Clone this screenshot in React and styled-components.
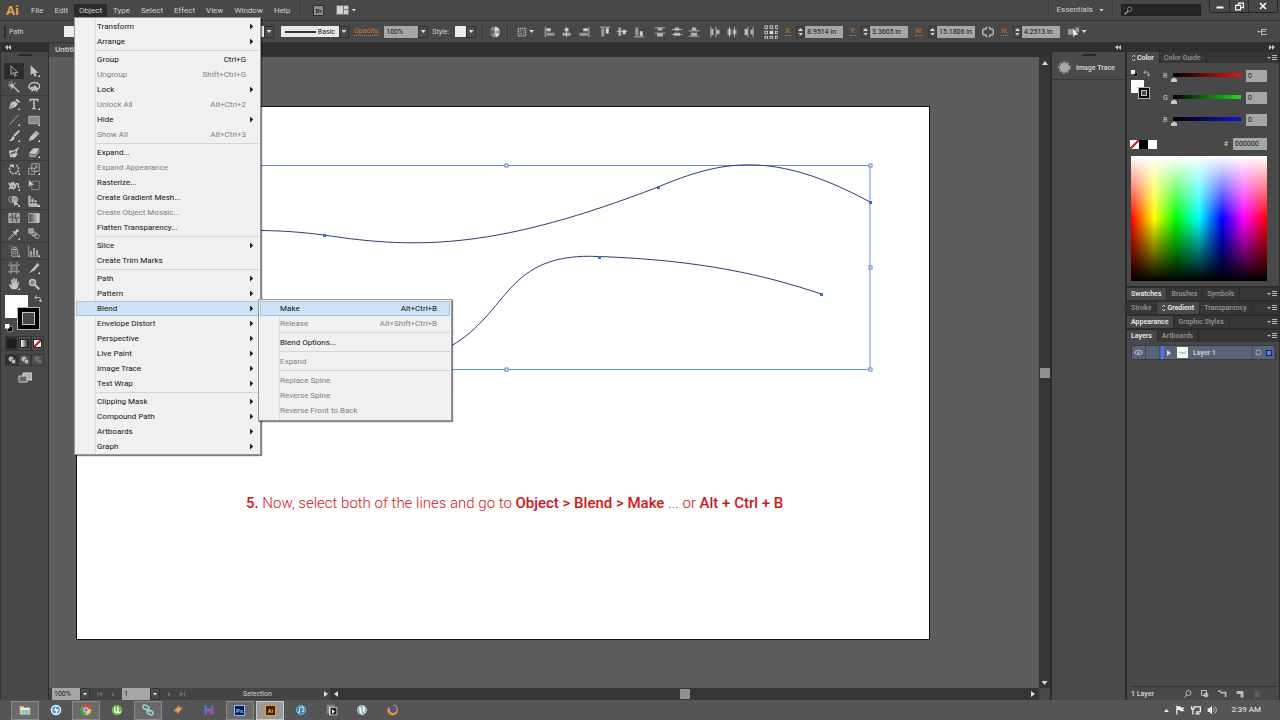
import React from 'react'
import styled, { createGlobalStyle, css } from 'styled-components'

const GlobalStyle = createGlobalStyle`
  * {
    box-sizing: border-box;
  }
  body {
    margin: 0;
    background: #484848;
    color: #d2d2d2;
    font-family: Roboto, "Open Sans", sans-serif;
    font-size: 8px;
    line-height: 10px;
  }
  button, input {
    font: inherit;
    color: inherit;
    margin: 0;
    padding: 0;
    border: 0;
    background: none;
    border-radius: 0;
  }
  ul {
    margin: 0;
    padding: 0;
    list-style: none;
  }
  svg {
    display: block;
    flex: none;
  }
`

const Screen = styled.div`
  display: flex;
  flex-direction: column;
  height: 100vh;
  min-height: 720px;
  overflow: hidden;
`

/* ---------- shared bits ---------- */

const Glyph = styled.svg.attrs((p) => ({
  viewBox: p.viewBox || '0 0 16 16',
  'aria-hidden': true,
}))`
  width: ${(p) => p.$w || 12}px;
  height: ${(p) => p.$h || p.$w || 12}px;
  fill: ${(p) => (p.$line ? 'none' : p.$c || '#b9b9b9')};
  stroke: ${(p) => (p.$line ? p.$c || '#b9b9b9' : 'none')};
  stroke-width: ${(p) => p.$sw || 1};
`

const turns = { down: 0, left: 90, up: 180, right: 270 }

const Caret = styled.i`
  width: ${(p) => (p.$big ? 6 : 5)}px;
  height: ${(p) => (p.$big ? 4 : 3)}px;
  flex: none;
  background: ${(p) => p.$c || '#dcdcdc'};
  clip-path: polygon(0 0, 100% 0, 50% 100%);
  transform: rotate(${(p) => turns[p.$to || 'down']}deg);
`

const Divider = styled.span`
  width: 1px;
  height: 14px;
  background: #3a3a3a;
  box-shadow: 1px 0 #505050;
`

const Grip = styled.span`
  display: block;
  width: 14px;
  height: 2px;
  margin: 0 auto;
  background: #2a2a2a;
`

/* ---------- menu bar ---------- */

const MenuBar = styled.header`
  display: flex;
  flex: none;
  height: 21px;
  padding-left: 6px;
  border-bottom: 1px solid #333;
  align-items: center;
  background: #484848;
`

const Logo = styled.span`
  width: 20px;
  color: #e0a04a;
  font: bold 13px/18px "Open Sans", sans-serif;
`

const Menus = styled.ul`
  display: flex;
  gap: 1px;
  height: 13px;
  margin-top: 1px;
`

const MenuSlot = styled.li`
  position: relative;
`

const MenuButton = styled.button`
  height: 13px;
  padding: 0 5px;
  font-size: 8px;
  background: ${(p) => (p.$open ? '#2b2b2b' : 'none')};
`

const BarTools = styled.div`
  display: flex;
  align-items: center;
  gap: 12px;
  margin-left: 5px;
`

const BarRight = styled.div`
  display: flex;
  align-items: center;
  gap: 8px;
  margin-left: auto;
  height: 100%;
`

const Workspace = styled.button`
  display: flex;
  align-items: center;
  gap: 6px;
`

const SearchBox = styled.label`
  display: flex;
  align-items: center;
  width: 80px;
  height: 12px;
  padding-left: 2px;
  background: #262626;
  border: 1px solid #202020;
  input {
    width: 60px;
    outline: 0;
  }
`

const WindowButtons = styled.div`
  display: flex;
  align-self: flex-start;
  margin-right: 2px;
  border: 1px solid #242424;
  border-top: 0;
  border-radius: 0 0 3px 3px;
`

const WindowButton = styled.button`
  display: flex;
  width: ${(p) => (p.$wide ? 29 : 19)}px;
  height: 12px;
  align-items: center;
  justify-content: center;
  background: #474747;
  & + & {
    border-left: 1px solid #2a2a2a;
  }
`

/* ---------- dropped menus ---------- */

const Popup = styled.ul`
  position: absolute;
  z-index: 5;
  width: ${(p) => (p.$sub ? 194 : 187)}px;
  top: ${(p) => (p.$sub ? '-2px' : '100%')};
  left: ${(p) => (p.$sub ? '182px' : '0')};
  padding: ${(p) => (p.$sub ? '1px 1px 2px' : '1px 1px 0')};
  color: #1c1c1c;
  background: linear-gradient(90deg, #f1f1f1 20px, #dcdcdc 20px, #dcdcdc 21px, #f0f0f0 21px);
  border: 1px solid #979797;
  box-shadow: 1px 1px 1px rgba(0, 0, 0, 0.5);
`

const PopupItem = styled.li`
  position: relative;
`

const PopupButton = styled.button`
  display: flex;
  width: 100%;
  height: 15px;
  align-items: center;
  padding: 0 ${(p) => (p.$sub ? 12 : 4)}px 0 ${(p) => (p.$sub ? 19 : 20)}px;
  font-size: 8px;
  border: 1px solid transparent;
  color: ${(p) => (p.disabled ? '#808080' : '#111')};
  ${(p) => p.$active && css`
    background: #cde2f5;
    border-color: #a5c5e3;
  `}
`

const Shortcut = styled.span`
  margin-left: auto;
  padding-right: ${(p) => (p.$sub ? 0 : 8)}px;
`

const SubArrow = styled.i`
  width: 3px;
  height: 6px;
  margin: 0 1px 0 auto;
  background: #111;
  clip-path: polygon(0 0, 100% 50%, 0 100%);
`

const Rule = styled.li`
  height: ${(p) => (p.$sub ? 4 : 3)}px;
  margin-left: 20px;
  background: linear-gradient(transparent 1px, #d4d4d4 1px, #d4d4d4 2px, transparent 2px);
`

const objectMenu = [
  { name: 'Transform', more: true },
  { name: 'Arrange', more: true },
  null,
  { name: 'Group', keys: 'Ctrl+G' },
  { name: 'Ungroup', keys: 'Shift+Ctrl+G', off: true },
  { name: 'Lock', more: true },
  { name: 'Unlock All', keys: 'Alt+Ctrl+2', off: true },
  { name: 'Hide', more: true },
  { name: 'Show All', keys: 'Alt+Ctrl+3', off: true },
  null,
  { name: 'Expand...' },
  { name: 'Expand Appearance', off: true },
  { name: 'Rasterize...' },
  { name: 'Create Gradient Mesh...' },
  { name: 'Create Object Mosaic...', off: true },
  { name: 'Flatten Transparency...' },
  null,
  { name: 'Slice', more: true },
  { name: 'Create Trim Marks' },
  null,
  { name: 'Path', more: true },
  { name: 'Pattern', more: true },
  {
    name: 'Blend',
    more: true,
    items: [
      { name: 'Make', keys: 'Alt+Ctrl+B', active: true },
      { name: 'Release', keys: 'Alt+Shift+Ctrl+B', off: true },
      null,
      { name: 'Blend Options...' },
      null,
      { name: 'Expand', off: true },
      null,
      { name: 'Replace Spine', off: true },
      { name: 'Reverse Spine', off: true },
      { name: 'Reverse Front to Back', off: true },
    ],
  },
  { name: 'Envelope Distort', more: true },
  { name: 'Perspective', more: true },
  { name: 'Live Paint', more: true },
  { name: 'Image Trace', more: true },
  { name: 'Text Wrap', more: true },
  null,
  { name: 'Clipping Mask', more: true },
  { name: 'Compound Path', more: true },
  { name: 'Artboards', more: true },
  { name: 'Graph', more: true },
]

const Menu = ({ items, sub }) => (
  <Popup $sub={sub}>
    {items.map((item, i) => item ? (
      <PopupItem key={item.name}>
        <PopupButton $sub={sub} disabled={item.off} $active={item.active || item.items}>
          {item.name}
          {item.keys && <Shortcut $sub={sub}>{item.keys}</Shortcut>}
          {item.more && <SubArrow />}
        </PopupButton>
        {item.items && <Menu items={item.items} sub />}
      </PopupItem>
    ) : <Rule key={i} $sub={sub} />)}
  </Popup>
)

/* ---------- control bar ---------- */

const ControlBar = styled.div`
  display: flex;
  flex: none;
  align-items: center;
  height: 22px;
  padding: 0 11px 0 4px;
  border-bottom: 1px solid #333;
  background: #484848;
`

const BarGrip = styled.span`
  width: 2px;
  height: 12px;
  margin-right: 3px;
  background: #2f2f2f;
`

const Kind = styled.span`
  width: 55px;
  font-size: 7px;
`

const Cluster = styled.div`
  display: flex;
  align-items: center;
  gap: ${(p) => p.$gap || 0}px;
  margin-left: ${(p) => p.$before || 0}px;
`

const Swatch = styled.span`
  width: ${(p) => p.$w || 11}px;
  height: 11px;
  background: #ececec;
`

const DropButton = styled.button`
  display: flex;
  width: 10px;
  height: 12px;
  align-items: center;
  justify-content: center;
  border: 1px solid #323232;
  background: #4b4b4b;
`

const BrushBox = styled.button`
  display: flex;
  width: 58px;
  height: 11px;
  padding: 0 4px;
  align-items: center;
  justify-content: space-between;
  color: #222;
  font-size: 7px;
  background: #e9e9e9;
`

const BrushLine = styled.i`
  width: 31px;
  height: 2px;
  background: #333;
`

const FieldName = styled.label`
  display: flex;
  align-items: center;
  gap: ${(p) => p.$gap || 5}px;
  color: ${(p) => (p.$plain ? '#d2d2d2' : '#c77a35')};
  font-size: 7px;
  span {
    border-bottom: ${(p) => (p.$plain ? '0' : '1px dotted #c77a35')};
    line-height: 8px;
  }
`

const Field = styled.input`
  width: ${(p) => p.$w || 38}px;
  height: 12px;
  padding-left: 2px;
  color: #151515;
  font-size: 7px;
  background: #a6a6a6;
`

const Steps = styled.i`
  display: flex;
  width: 9px;
  height: 12px;
  flex-direction: column;
  align-items: center;
  justify-content: space-around;
  border: 1px solid #363636;
`

const Value = ({ name, value }) => (
  <FieldName>
    <span>{name}:</span>
    <Cluster>
      <Steps>
        <Caret $to="up" />
        <Caret />
      </Steps>
      <Field defaultValue={value} />
    </Cluster>
  </FieldName>
)

const IconButton = styled.button`
  display: flex;
  align-items: center;
  justify-content: center;
  gap: 2px;
`

const alignIcons = [
  ['Align left', <><path d="M1 1h1v14H1z" /><path d="M3 3h6v4H3z" /><path d="M3 9h11v4H3z" opacity=".6" /></>],
  ['Align center', <><path d="M7 1h1v14H7z" /><path d="M5 3h5v4H5z" /><path d="M2 9h11v4H2z" opacity=".7" /></>],
  ['Align right', <><path d="M14 1h1v14h-1z" /><path d="M7 3h6v4H7z" /><path d="M2 9h11v4H2z" opacity=".6" /></>],
  ['Align top', <><path d="M1 1h14v1H1z" /><path d="M3 3h4v11H3z" opacity=".6" /><path d="M9 3h4v7H9z" /></>],
  ['Align middle', <><path d="M1 7h14v1H1z" /><path d="M3 2h4v11H3z" opacity=".7" /><path d="M9 5h4v6H9z" /></>],
  ['Align bottom', <><path d="M1 14h14v1H1z" /><path d="M3 2h4v11H3z" opacity=".6" /><path d="M9 7h4v6H9z" /></>],
  ['Distribute top', <><path d="M1 2h14v1H1zM1 9h14v1H1z" /><path d="M5 3h6v3H5zM4 10h8v4H4z" opacity=".8" /></>],
  ['Distribute middle', <><path d="M1 4h14v1H1zM1 11h14v1H1z" /><path d="M5 2h6v4H5zM4 9h8v4H4z" opacity=".8" /></>],
  ['Distribute bottom', <><path d="M1 6h14v1H1zM1 13h14v1H1z" /><path d="M5 2h6v4H5zM4 9h8v4H4z" opacity=".8" /></>],
  ['Distribute left', <><path d="M2 1h1v14H2zM9 1h1v14H9z" /><path d="M3 4h3v8H3zM10 5h4v6h-4z" opacity=".8" /></>],
  ['Distribute center', <><path d="M4 1h1v14H4zM11 1h1v14h-1z" /><path d="M2 4h5v8H2zM9 5h5v6H9z" opacity=".7" /></>],
  ['Distribute right', <><path d="M6 1h1v14H6zM13 1h1v14h-1z" /><path d="M2 4h4v8H2zM10 5h3v6h-3z" opacity=".8" /></>],
]

const AlignRow = styled.div`
  display: flex;
  gap: 5px;
  margin-left: 10px;
  button:nth-child(3n + 1):not(:first-child) {
    margin-left: 4px;
  }
`

/* ---------- tools panel ---------- */

const Body = styled.main`
  display: flex;
  flex: 1;
  min-height: 0;
`

const ToolsPanel = styled.aside`
  width: 49px;
  flex: none;
  border-right: 1px solid #2e2e2e;
  border-left: 1px solid #333;
  background: #484848;
`

const Strip = styled.div`
  display: flex;
  height: 9px;
  padding: 0 4px;
  align-items: center;
  justify-content: ${(p) => (p.$end ? 'flex-end' : 'flex-start')};
  background: #2f2f2f;
`

const ToolsGrip = styled(Grip)`
  margin: 2px auto 7px;
`

const ToolGroup = styled.div`
  display: grid;
  grid-template-columns: 20px 20px;
  padding: 0 3px;
  & + & {
    border-top: 1px solid #3b3b3b;
  }
`

const ToolButton = styled.button`
  display: flex;
  height: 16px;
  align-items: center;
  justify-content: center;
  background: ${(p) => (p.$on ? '#2c2c2c' : 'none')};
`

const corner = <path d="M16 13v3h-3z" fill="#ddd" stroke="none" />

const tools = [
  [
    ['Selection', <path d="M4 1v12l3-3 2 5 2-1-2-4h4z" fill="#333" stroke="#ccc" />],
    ['Direct selection', <><path d="M4 1v12l3-3 2 5 2-1-2-4h4z" fill="#c4c4c4" />{corner}</>],
    ['Magic wand', <><path d="M6 6l9 9" strokeWidth="2" /><path d="M5 0v3M5 8v3M0 5h3M8 4l3-2M1 1l2 2M2 9l2-2M5 3l1 2 2 0-2 2v2L4 7 2 6l2-1z" fill="#c4c4c4" /></>],
    ['Lasso', <><path d="M6 11C1 11 0 7 3 4s10-3 12 1-1 5-3 6M5 11c-2-2 1-4 2-2s-1 3-2 5" strokeWidth="2" /><path d="M8 5v9l2-2 2 3 1-1-1-3h3z" fill="#c4c4c4" stroke="none" /></>],
  ],
  [
    ['Pen', <><path d="M1 15L4 6l5-2 4 4-3 4z" fill="#c4c4c4" stroke="none" /><path d="M10 3l2-2 4 4-2 2z" fill="#c4c4c4" stroke="none" /><path d="M2 14l5-5" stroke="#444" />{corner}</>],
    ['Type', <><path d="M2 1h12v4h-1l-1-2H9v10l2 1v1H5v-1l2-1V3H4L3 5H2z" fill="#c4c4c4" stroke="none" />{corner}</>],
    ['Line', <><path d="M2 14L14 1" />{corner}</>],
    ['Rectangle', <><path d="M1 3h14v10H1z" fill="#8a8a8a" />{corner}</>],
    ['Paintbrush', <><path d="M15 1L8 8" strokeWidth="3" /><path d="M1 14c4 0 3-5 6-6l2 2c0 4-5 6-8 4z" fill="#c4c4c4" stroke="none" />{corner}</>],
    ['Pencil', <><path d="M1 15l2-6 8-8 4 4-8 8z" fill="#c4c4c4" stroke="none" /><path d="M9 3l4 4" stroke="#555" />{corner}</>],
    ['Blob brush', <><path d="M1 6h7l7-5-4 8 2 1-3 5H3z" fill="#c4c4c4" stroke="none" /><path d="M4 11c2-4 4 0 6-4" stroke="#444" strokeWidth="2" /></>],
    ['Eraser', <><path d="M1 10l6-7h8l-5 8z" fill="#c9c9c9" stroke="none" /><path d="M1 11l9 1 5-8v4l-5 7H2z" fill="#999" stroke="none" />{corner}</>],
  ],
  [
    ['Rotate', <><path d="M5 3a6 6 0 1 0 6 0" strokeWidth="2" strokeDasharray="3 1" /><path d="M2 2h6v5z" fill="#c4c4c4" stroke="none" />{corner}</>],
    ['Scale', <><path d="M1 7h8v8H1zM5 1h10v10H5z" /><path d="M8 8l4-4M9 4h3v3" />{corner}</>],
    ['Width', <><path d="M1 13c4 0 2-8 4-8s0 9 3 8 1-7 4-7 1 6 3 6M1 5l4 8M7 4l3 8" strokeWidth="2" />{corner}</>],
    ['Free transform', <><path d="M5 3h10v11H5z" strokeDasharray="2 1" /><path d="M1 1v10l3-3 4 0z" fill="#c4c4c4" stroke="none" /></>],
    ['Shape builder', <><circle cx="5" cy="6" r="4" /><circle cx="9" cy="6" r="4" fill="#999" /><path d="M8 6v9l2-2 5 1z" fill="#c4c4c4" stroke="none" />{corner}</>],
    ['Perspective grid', <><path d="M2 1v13M6 4v10M10 7v7M1 14h14" strokeWidth="3" /><path d="M2 5h6M2 10h10" stroke="#484848" />{corner}</>],
  ],
  [
    ['Mesh', <><path d="M1 2h14v12H1z" fill="#999" /><path d="M1 8c5-5 8 4 14-1M5 2c4 4-2 8 2 12M11 2c-3 5 2 8 0 12" stroke="#333" /></>],
    ['Gradient', <><defs><linearGradient id="grey"><stop stopColor="#444" /><stop offset="1" stopColor="#ddd" /></linearGradient></defs><path d="M1 2h14v12H1z" fill="url(#grey)" /></>],
    ['Eyedropper', <><path d="M9 5l3-4 3 3-4 3 1 2-1 1-5-5 1-1z" fill="#c4c4c4" stroke="none" /><path d="M8 7l-6 6-1 2 2-1 6-6" />{corner}</>],
    ['Blend', <><path d="M1 1h6v6H1z" fill="#999" /><circle cx="8" cy="8" r="3" fill="#777" /><circle cx="12" cy="11" r="3" /></>],
  ],
  [
    ['Symbol sprayer', <><path d="M5 6h8v9H5zM7 3h4v3H7z" /><circle cx="9" cy="10" r="2" /><path d="M1 2h1M4 1h1M1 5h1M4 4h1" />{corner}</>],
    ['Column graph', <><path d="M1 1v14h14" /><path d="M4 8v6M8 4v10M12 7v7" strokeWidth="2" />{corner}</>],
  ],
  [
    ['Artboard', <><path d="M4 4h8v9H4z" fill="#666" /><path d="M4 0v3M12 0v3M4 13v3M12 13v3M0 4h3M0 13h3M13 4h3M13 13h3" /></>],
    ['Slice', <><path d="M1 15L13 1l2 3-6 7z" fill="#c4c4c4" stroke="none" />{corner}</>],
    ['Hand', <><path d="M5 15L1 9l1-1 3 2-1-8h2l1 5V0h2v7l1-6h2v7l2-4 1 1-2 8-2 2z" fill="#c4c4c4" stroke="none" />{corner}</>],
    ['Zoom', <><circle cx="6" cy="6" r="4" fill="#888" strokeWidth="2" /><path d="M9 9l6 6" strokeWidth="3" /></>],
  ],
]

const PaintWell = styled.div`
  position: relative;
  height: 37px;
  margin: 3px 4px 4px;
`

const Fill = styled.span`
  position: absolute;
  left: 0;
  top: 0;
  width: ${(p) => (p.$small ? 13 : 23)}px;
  height: ${(p) => (p.$small ? 13 : 23)}px;
  background: #fff;
`

const Stroke = styled.span`
  position: absolute;
  left: ${(p) => (p.$small ? 7 : 12)}px;
  top: ${(p) => (p.$small ? 7 : 12)}px;
  width: ${(p) => (p.$small ? 12 : 23)}px;
  height: ${(p) => (p.$small ? 12 : 23)}px;
  border: 1px solid #b5b5b5;
  background: #000;
  &::after {
    content: '';
    position: absolute;
    inset: ${(p) => (p.$small ? 2 : 4)}px;
    border: 1px solid #c5c5c5;
    background: #484848;
  }
`

const SwapArrow = styled(Glyph)`
  position: absolute;
  right: 2px;
  top: 0;
`

const DefaultPaint = styled(Glyph)`
  position: absolute;
  left: 0;
  bottom: 0;
`

const ModeRow = styled.div`
  display: flex;
  margin: 0 4px 3px;
`

const ModeButton = styled.button`
  display: flex;
  width: 13px;
  height: ${(p) => (p.$tall ? 15 : 12)}px;
  align-items: center;
  justify-content: center;
  border: 1px solid #363636;
  background: ${(p) => (p.$on ? '#303030' : '#4e4e4e')};
`

const Paint = styled.i`
  width: 9px;
  height: 9px;
  background: ${(p) => p.$fill};
  border: ${(p) => (p.$flat ? '0' : '1px solid #222')};
`

const noPaint = 'linear-gradient(135deg, #fff 42%, #d0202a 42%, #d0202a 58%, #fff 58%)'

const ScreenMode = styled.button`
  display: flex;
  margin: 6px auto 0;
`

/* ---------- document ---------- */

const Document = styled.section`
  display: flex;
  flex: 1;
  min-width: 0;
  flex-direction: column;
`

const TabStrip = styled.div`
  height: 14px;
  flex: none;
  background: #303030;
`

const DocTab = styled.button`
  height: 14px;
  width: 180px;
  padding-left: 6px;
  text-align: left;
  font-weight: 500;
  background: #474747;
`

const Stage = styled.div`
  display: flex;
  flex: 1;
  min-height: 0;
`

const Pasteboard = styled.div`
  display: flex;
  flex: 1;
  padding: 49px 109px 48px 27px;
  background: #5d5d5d;
`

const Artboard = styled.div`
  flex: 1;
  border: 1px solid #111;
  background: #fff;
  overflow: hidden;
`

const Drawing = styled.svg`
  width: 100%;
  height: auto;
`

const Caption = styled.p`
  margin: 108px 0 0 169px;
  color: #d3151b;
  font-size: 15px;
  font-weight: 300;
  line-height: 24px;
  white-space: nowrap;
  b {
    font-weight: 500;
  }
`

const ScrollTrack = styled.div`
  display: flex;
  flex: ${(p) => (p.$across ? 1 : 'none')};
  flex-direction: ${(p) => (p.$across ? 'row' : 'column')};
  ${(p) => !p.$across && 'width: 11px;'}
  padding: ${(p) => (p.$across ? '0 3px' : '4px 0 3px')};
  align-items: center;
  justify-content: space-between;
  background: #353535;
`

const ScrollThumb = styled.i`
  width: 10px;
  height: 10px;
  background: #909090;
`

const StatusBar = styled.div`
  display: flex;
  flex: none;
  height: 12px;
  padding-left: 3px;
  background: #444;
`

const PageNav = styled.div`
  display: flex;
  align-items: center;
  gap: 7px;
  padding: 0 7px;
`

const StatusText = styled.button`
  display: flex;
  width: 138px;
  padding-right: 1px;
  align-items: center;
  font-size: 7px;
  span {
    flex: 1;
    text-align: center;
  }
`

const CornerBox = styled.span`
  width: 11px;
  background: #484848;
`

/* ---------- docks ---------- */

const IconDock = styled.aside`
  width: 77px;
  flex: none;
  border-right: 2px solid #2c2c2c;
  border-left: 2px solid #2c2c2c;
  background: #4a4a4a;
`

const DockEntry = styled.button`
  display: flex;
  width: 100%;
  flex-direction: column;
  gap: 5px;
  height: 28px;
  padding-top: 2px;
  border-bottom: 1px solid #383838;
`

const DockLabel = styled.span`
  display: flex;
  align-items: center;
  gap: 5px;
  padding-left: 6px;
  font-size: 7px;
  font-weight: 600;
`

const Panels = styled.aside`
  display: flex;
  width: 153px;
  flex: none;
  flex-direction: column;
  background: #484848;
  border-right: 1px solid #2c2c2c;
`

const Tabs = styled.div`
  display: flex;
  flex: none;
  height: ${(p) => (p.$first ? 11 : 14)}px;
  border-top: ${(p) => (p.$first ? 0 : 2)}px solid #2c2c2c;
  align-items: stretch;
  background: #363636;
`

const Tab = styled.button`
  display: flex;
  align-items: center;
  gap: 1px;
  padding: 0 5px 0 4px;
  font-size: 7px;
  font-weight: 600;
  color: ${(p) => (p.$on ? '#e8e8e8' : '#909090')};
  background: ${(p) => (p.$on ? '#484848' : 'none')};
  border-right: 1px solid #2c2c2c;
`

const PanelMenu = styled.button`
  margin: 0 2px 0 auto;
`

const TabBar = ({ names, on, first, mark }) => (
  <Tabs $first={first}>
    {names.map((name) => (
      <Tab key={name} $on={name === on}>
        {mark && name === on && (
          <Glyph $w={5} $h={8} $line viewBox="0 0 5 8"><path d="M1 3l2-2 1 2M1 5l2 2 1-2" /></Glyph>
        )}
        {name}
      </Tab>
    ))}
    <PanelMenu aria-label="Panel menu">
      <Glyph $w={10} $h={8} viewBox="0 0 10 8"><path d="M0 3h4L2 5zM5 1h5v1H5zM5 3h5v1H5zM5 5h5v1H5z" /></Glyph>
    </PanelMenu>
  </Tabs>
)

const ColorBody = styled.div`
  display: flex;
  flex: none;
  flex-direction: column;
  padding: 7px 12px 5px 4px;
`

const Mixer = styled.div`
  display: flex;
`

const ColorSide = styled.div`
  width: 32px;
  flex: none;
`

const SmallWell = styled.div`
  position: relative;
  height: 30px;
  margin-top: 3px;
`

const Channels = styled.div`
  display: flex;
  flex: 1;
  min-width: 0;
  flex-direction: column;
  gap: 10px;
`

const Channel = styled.label`
  display: flex;
  height: 12px;
  align-items: center;
  font-size: 7px;
  span {
    width: 10px;
  }
`

const Slider = styled.input`
  flex: 1;
  min-width: 0;
  height: 12px;
  margin-right: 5px;
  appearance: none;
  background: linear-gradient(90deg, #000, ${(p) => p.$to}) 0 3px / 100% 4px no-repeat;
  &::-webkit-slider-thumb {
    appearance: none;
    width: 6px;
    height: 12px;
    margin-left: -2px;
    background: #c8c8c8;
    clip-path: polygon(50% 60%, 100% 80%, 100% 100%, 0 100%, 0 80%);
  }
`

const HexRow = styled.div`
  display: flex;
  margin: 12px 0 6px;
  align-items: center;
  justify-content: space-between;
`

const Chips = styled.div`
  display: flex;
  margin-left: -1px;
`

const Spectrum = styled.div`
  height: 125px;
  background:
    linear-gradient(#fff, rgba(255, 255, 255, 0) 50%, rgba(0, 0, 0, 0) 50%, #000),
    linear-gradient(90deg, #f00, #ff0 17%, #0f0 33%, #0ff 50%, #00f 67%, #f0f 83%, #f00);
`

const LayerList = styled.div`
  flex: 1;
  margin: 3px 3px 0 4px;
  border-bottom: 1px solid #333;
`

const Layer = styled.div`
  display: flex;
  height: 15px;
  align-items: stretch;
  border: 1px solid #363b47;
  background: #5b6376;
`

const LayerCell = styled.span`
  display: flex;
  width: ${(p) => p.$w}px;
  align-items: center;
  justify-content: center;
  gap: 4px;
  border-right: ${(p) => (p.$blue ? '3px solid #4a75e8' : '1px solid #454b5a')};
`

const LayerName = styled.button`
  display: flex;
  flex: 1;
  gap: 5px;
  padding-left: 2px;
  align-items: center;
  font-size: 7px;
  font-weight: 600;
`

const Thumb = styled(Glyph)`
  background: #fff;
`

const LayerMark = styled.i`
  width: 6px;
  height: 6px;
  border: 1px solid #0d1d78;
  background: #5b86ee;
`

const LayerFoot = styled.div`
  display: flex;
  height: 13px;
  padding: 0 18px 0 4px;
  align-items: center;
  gap: 9px;
  font-size: 7px;
  font-weight: 600;
  span {
    margin-right: auto;
  }
`

/* ---------- taskbar ---------- */

const Taskbar = styled.footer`
  display: flex;
  flex: none;
  height: 20px;
  padding: 0 19px 0 11px;
  align-items: center;
  justify-content: space-between;
  background: #555;
`

const Apps = styled.div`
  display: flex;
  width: 396px;
  justify-content: space-between;
`

const AppButton = styled.button`
  display: flex;
  width: 28px;
  height: 19px;
  align-items: center;
  justify-content: center;
  ${(p) => p.$run && css`
    border: 1px solid ${p.$run === 'front' ? '#c8c8c8' : '#8a8a8a'};
    background: ${p.$run === 'front' ? '#9a9a9a' : '#6a6a6a'};
  `}
`

const Badge = styled.span`
  width: 11px;
  height: 11px;
  border: 1px solid ${(p) => p.$ink};
  color: ${(p) => p.$ink};
  background: ${(p) => p.$bg};
  font-size: 6px;
  font-weight: bold;
  line-height: 9px;
  text-align: center;
`

const Tray = styled.div`
  display: flex;
  align-items: center;
  gap: 6px;
  color: #f0f0f0;
  font-size: 8px;
  time {
    margin-left: 8px;
  }
`

const apps = [
  ['Explorer', 'open', <><path d="M1 3h5l1 2h8v9H1z" fill="#e8cf7a" /><path d="M3 8h11v6H3z" fill="#8cc7d8" /><path d="M2 5h12v3H2z" fill="#f5ecc0" /></>],
  ['Daemon', null, <><circle cx="8" cy="8" r="7" fill="#eef6fc" /><circle cx="8" cy="8" r="5" fill="#3f8fd0" /><path d="M9 1L5 9h3l-1 6 5-8H8z" fill="#fff" /></>],
  ['Chrome', 'open', <><circle cx="8" cy="8" r="7" fill="#f0c63c" /><path d="M2 4a7 7 0 0 1 13 3H8z" fill="#d8473a" /><path d="M2 4a7 7 0 0 0 5 11l3-6z" fill="#4ba557" /><circle cx="8" cy="8" r="3" fill="#4c8bf0" stroke="#fff" /></>],
  ['uTorrent', null, <><circle cx="8" cy="8" r="7" fill="#6fb74a" /><path d="M5 4v5c0 3 4 3 4 0V4M9 9c0 3 3 3 4 1" fill="none" stroke="#fff" strokeWidth="2" /></>],
  ['Links', 'open', <g fill="none" stroke="#9bd3cf" strokeWidth="2"><rect x="1" y="2" width="8" height="5" rx="2" transform="rotate(25 5 5)" /><rect x="7" y="9" width="8" height="5" rx="2" transform="rotate(25 11 11)" /><path d="M6 6l5 5" /></g>],
  ['Winamp', null, <><path d="M2 9l7-7 2 2 3 1-6 8-2-2z" fill="#d98e3c" /><path d="M5 9l4-4 2 2-4 3z" fill="#fbe6c0" /><path d="M4 12l7-8" stroke="#7a4a1c" /></>],
  ['Notes', null, <><path d="M2 2h3v4h6V2h3v12h-3v-4H5v4H2z" fill="#4d7ce0" /><path d="M5 9l4 4 6-8" stroke="#d8324c" strokeWidth="2" fill="none" /></>],
  ['Photoshop', 'open', 'Ps'],
  ['Illustrator', 'front', 'Ai'],
  ['iTunes', null, <><circle cx="8" cy="8" r="6" fill="#2d86c4" stroke="#9bd0f2" /><path d="M6 11V5l5-1v6" fill="none" stroke="#fff" strokeWidth="1" /><circle cx="5" cy="11" r="1" fill="#fff" /><circle cx="10" cy="10" r="1" fill="#fff" /></>],
  ['Player', null, <><path d="M1 1h11v4H5v8H1z" fill="#888" /><path d="M4 4h11v11H4z" fill="#ddd" /><path d="M6 5h8v9H6z" fill="#222" /><path d="M8 7v6l4-3z" fill="#fff" /></>],
  ['Safari', null, <><circle cx="8" cy="8" r="6" fill="#7fa6b4" stroke="#d9e6ea" /><path d="M4 3l3 2 1 9-3-3zM9 2l3 4-1 7-2-4z" fill="#fff" /></>],
  ['Firefox', null, <><circle cx="8" cy="8" r="5" fill="#41589c" /><path d="M2 4a7 7 0 1 0 11 0c1 5-2 8-5 8S3 9 4 6z" fill="#f0932b" /><path d="M8 2c4 0 6 3 5 7 2-4 0-8-5-8z" fill="#f7c33c" /></>],
]

const menuNames = ['File', 'Edit', 'Object', 'Type', 'Select', 'Effect', 'View', 'Window', 'Help']

const handles = [[142, 166], [506, 166], [870, 166], [142, 268], [870, 268], [142, 370], [506, 370], [870, 370]]
const anchors = [[324, 236], [658, 188], [870, 203], [599, 258], [821, 295]]

const Chevrons = ({ back }) => (
  <Glyph $w={6} $h={5} viewBox="0 0 6 5" $c="#c8c8c8">
    <path d={back ? 'M3 0v5L0 2zM6 0v5L3 2z' : 'M0 0v5l3-3zM3 0v5l3-3z'} />
  </Glyph>
)

export default function App() {
  return (
    <Screen>
      <GlobalStyle />
      <MenuBar>
        <Logo>Ai</Logo>
        <Menus>
          {menuNames.map((name) => (
            <MenuSlot key={name}>
              <MenuButton $open={name === 'Object'}>{name}</MenuButton>
              {name === 'Object' && <Menu items={objectMenu} />}
            </MenuSlot>
          ))}
        </Menus>
        <BarTools>
          <Divider />
          <Badge $ink="#2e2e2e" $bg="#8a8a8a">Br</Badge>
          <IconButton aria-label="Arrange documents">
            <Glyph $w={13} $h={10} viewBox="0 0 13 10"><path d="M0 0h13v10H0z" fill="#777" /><path d="M1 1h6v8H1zM8 1h4v3H8zM8 5h4v4H8z" fill="#d0d0d0" /></Glyph>
            <Caret />
          </IconButton>
        </BarTools>
        <BarRight>
          <Divider />
          <Workspace>Essentials <Caret /></Workspace>
          <Divider />
          <SearchBox>
            <Glyph $w={9} $line><circle cx="10" cy="6" r="4" /><path d="M7 9l-6 6" strokeWidth="2" /></Glyph>
            <input aria-label="Search" />
          </SearchBox>
          <WindowButtons>
            <WindowButton aria-label="Minimize"><Glyph $w={8} $c="#fff"><path d="M1 9h14v4H1z" /></Glyph></WindowButton>
            <WindowButton aria-label="Restore"><Glyph $w={9} $line $c="#fff" $sw={2}><path d="M6 5V2h9v8h-4M1 6h9v8H1z" /></Glyph></WindowButton>
            <WindowButton $wide aria-label="Close"><Glyph $w={8} $line $c="#fff" $sw={3}><path d="M2 2l12 12M14 2L2 14" /></Glyph></WindowButton>
          </WindowButtons>
        </BarRight>
      </MenuBar>

      <ControlBar>
        <BarGrip />
        <Kind>Path</Kind>
        <Swatch $w={200} />
        <DropButton aria-label="Stroke profile"><Caret /></DropButton>
        <Cluster $before={7}>
          <BrushBox><BrushLine />Basic</BrushBox>
          <DropButton aria-label="Brush list"><Caret /></DropButton>
        </Cluster>
        <Cluster $before={5}>
          <FieldName $gap={5}><span>Opacity:</span><Field $w={34} defaultValue="100%" /></FieldName>
          <DropButton aria-label="Opacity list"><Caret /></DropButton>
        </Cluster>
        <Cluster $before={4}>
          <FieldName $plain as="span" $gap={6}><span>Style:</span><Swatch /></FieldName>
          <DropButton aria-label="Style list"><Caret /></DropButton>
        </Cluster>
        <Cluster $before={6} $gap={6}>
          <Divider />
          <IconButton aria-label="Recolor artwork">
            <Glyph><circle cx="8" cy="8" r="7" fill="#8f8f8f" /><path d="M8 8V1a7 7 0 0 1 6 4zM8 8l6 3a7 7 0 0 1-5 4z" fill="#d8d8d8" /><path d="M8 8L2 4a7 7 0 0 0 0 8z" fill="#5c5c5c" /></Glyph>
          </IconButton>
          <Divider />
        </Cluster>
        <Cluster $before={9}>
          <IconButton aria-label="Align to">
            <Glyph $w={10} $line><path d="M2 2h12v12H2z" strokeDasharray="2 1" strokeWidth="2" /><path d="M5 5h6v6H5z" /></Glyph>
            <Caret />
          </IconButton>
        </Cluster>
        <AlignRow>
          {alignIcons.map(([name, shape]) => (
            <IconButton key={name} aria-label={name}><Glyph $c="#cfcfcf">{shape}</Glyph></IconButton>
          ))}
        </AlignRow>
        <Cluster $before={9} $gap={7}>
          <Glyph $w={14} $line $c="#d0d0d0">
            {[2, 8, 14].map((x) => [2, 8, 14].map((y) => (
              <rect key={`${x}-${y}`} x={x - 1} y={y - 1} width="3" height="3" fill={x === 8 && y === 8 ? '#fff' : 'none'} />
            )))}
          </Glyph>
          <Value name="X" value="8.9514 in" />
          <Value name="Y" value="3.3605 in" />
          <Value name="W" value="15.1806 in" />
          <IconButton aria-label="Constrain proportions">
            <Glyph $line $sw={2}><path d="M6 4H3c-3 0-3 8 0 8h3M10 4h3c3 0 3 8 0 8h-3M6 1v2M10 1v2M6 13v2M10 13v2" /></Glyph>
          </IconButton>
          <Value name="H" value="4.2513 in" />
          <IconButton aria-label="Isolate">
            <Glyph $w={13}><path d="M1 5h7v7H1zM10 3h5v6h-5z" opacity=".7" /><path d="M7 4l1 11 2-3 4 0z" fill="#eee" /></Glyph>
            <Caret />
          </IconButton>
        </Cluster>
        <PanelMenu aria-label="Control menu">
          <Glyph $w={10} $h={8} viewBox="0 0 10 8"><path d="M0 3h4L2 5zM4 1h1v6H4zM5 1h5v1H5zM5 3h4v1H5zM5 6h5v1H5z" /></Glyph>
        </PanelMenu>
      </ControlBar>

      <Body>
        <ToolsPanel>
          <Strip><Chevrons back /></Strip>
          <ToolsGrip />
          {tools.map((group, g) => (
            <ToolGroup key={g}>
              {group.map(([name, shape], i) => (
                <ToolButton key={name} aria-label={name} $on={g === 0 && i === 0}>
                  <Glyph $line $c="#c0c0c0">{shape}</Glyph>
                </ToolButton>
              ))}
            </ToolGroup>
          ))}
          <PaintWell>
            <Fill />
            <Stroke />
            <SwapArrow $w={8} $line><path d="M2 5h8c3 0 3 2 3 8M5 1L2 5l3 4M10 10l3 4 3-4" strokeWidth="2" /></SwapArrow>
            <DefaultPaint $w={8}><path d="M5 5h10v10H5z" fill="#000" stroke="#ccc" /><path d="M0 0h9v9H0z" fill="#fff" /></DefaultPaint>
          </PaintWell>
          <ModeRow>
            <ModeButton $tall $on aria-label="Color"><Paint $fill="#1c1c1c" /></ModeButton>
            <ModeButton $tall aria-label="Gradient"><Paint $fill="linear-gradient(90deg, #fff, #222)" /></ModeButton>
            <ModeButton $tall aria-label="None"><Paint $fill={noPaint} /></ModeButton>
          </ModeRow>
          <ModeRow>
            {['normal', 'behind', 'inside'].map((m, i) => (
              <ModeButton key={m} $on={i === 0} aria-label={`Draw ${m}`}>
                <Glyph $w={8} opacity={i === 2 ? 0.3 : 1}><circle cx="6" cy="6" r="5" /><path d="M7 7h8v8H7z" stroke="#444" /></Glyph>
              </ModeButton>
            ))}
          </ModeRow>
          <ScreenMode aria-label="Screen mode">
            <Glyph $w={14} $h={11} viewBox="0 0 14 11"><path d="M5 1h9v7H5z" fill="#aaa" stroke="#ddd" /><path d="M1 4h8v6H1z" fill="#666" stroke="#ccc" /></Glyph>
          </ScreenMode>
        </ToolsPanel>

        <Document>
          <TabStrip><DocTab>Untitled-1* @ 100% (RGB/Preview)</DocTab></TabStrip>
          <Stage>
            <Pasteboard>
              <Artboard>
                <Drawing viewBox="77 107 852 276" fill="none">
                  <path d="M142 165.5H870V369.5H142z" stroke="#6d8fd6" />
                  <g stroke="#2c3c78">
                    <path d="M142 262C180 238 220 230 262 230.5C285 231 300 232 324 235C420 250 500 248 658 187C722 160 774 150 870 202" />
                    <path d="M200 330C300 380 400 380 451 346C510 312 505 252 599 256.5C700 260 765 275 821 294" />
                  </g>
                  {handles.map(([x, y]) => (
                    <rect key={`${x}-${y}`} x={x - 1} y={y - 2} width="3" height="3" fill="#fff" stroke="#5b80cf" />
                  ))}
                  {anchors.map(([x, y]) => (
                    <rect key={`${x}-${y}`} x={x - 1} y={y - 2} width="3" height="3" fill="#3f68c8" />
                  ))}
                </Drawing>
                <Caption>
                  <b>5.</b> Now, select both of the lines and go to <b>Object &gt; Blend &gt; Make</b> ... or <b>Alt + Ctrl + B</b>
                </Caption>
              </Artboard>
            </Pasteboard>
            <ScrollTrack>
              <Caret $big $to="up" />
              <ScrollThumb />
              <Caret $big />
            </ScrollTrack>
          </Stage>
          <StatusBar>
            <Field $w={28} aria-label="Zoom" defaultValue="100%" />
            <DropButton aria-label="Zoom list"><Caret /></DropButton>
            <PageNav>
              <Glyph $w={6} $c="#6c6c6c"><path d="M0 1h3v14H0zM14 1v14L4 8z" /></Glyph>
              <Caret $to="left" $c="#6c6c6c" />
            </PageNav>
            <Field $w={28} aria-label="Artboard" defaultValue="1" />
            <DropButton aria-label="Artboard list"><Caret /></DropButton>
            <PageNav>
              <Caret $to="right" $c="#6c6c6c" />
              <Glyph $w={6} $c="#6c6c6c"><path d="M13 1h3v14h-3zM2 1v14l10-7z" /></Glyph>
            </PageNav>
            <StatusText><span>Selection</span><Caret $big $to="right" /></StatusText>
            <ScrollTrack $across>
              <Caret $big $to="left" />
              <ScrollThumb />
              <Caret $big $to="right" />
            </ScrollTrack>
            <CornerBox />
          </StatusBar>
        </Document>

        <IconDock>
          <Strip $end><Chevrons back /></Strip>
          <DockEntry>
            <Grip />
            <DockLabel>
              <Glyph $w={13}><circle cx="8" cy="8" r="6" fill="#a8a8a8" /><circle cx="8" cy="8" r="7" fill="none" stroke="#d8d8d8" strokeDasharray="3 2" /></Glyph>
              Image Trace
            </DockLabel>
          </DockEntry>
        </IconDock>

        <Panels>
          <Strip $end><Chevrons /></Strip>
          <TabBar first mark names={['Color', 'Color Guide']} on="Color" />
          <ColorBody>
            <Mixer>
              <ColorSide>
                <Cluster $gap={5}>
                  <Glyph $w={7}><path d="M5 5h10v10H5z" fill="#000" stroke="#ccc" /><path d="M0 0h9v9H0z" fill="#fff" /></Glyph>
                  <Glyph $w={7} $line><path d="M2 5h8c3 0 3 2 3 8M5 1L2 5l3 4M10 10l3 4 3-4" strokeWidth="2" /></Glyph>
                </Cluster>
                <SmallWell><Fill $small /><Stroke $small /></SmallWell>
              </ColorSide>
              <Channels>
                {[['R', '#e01818'], ['G', '#22d822'], ['B', '#1212d8']].map(([name, to]) => (
                  <Channel key={name}>
                    <span>{name}</span>
                    <Slider type="range" min="0" max="255" defaultValue="0" $to={to} />
                    <Field $w={21} defaultValue="0" aria-label={`${name} value`} />
                  </Channel>
                ))}
              </Channels>
            </Mixer>
            <HexRow>
              <Chips><Paint $flat $fill={noPaint} /><Paint $flat $fill="#000" /><Paint $flat $fill="#fff" /></Chips>
              <FieldName $plain><span>#</span><Field $w={34} defaultValue="000000" /></FieldName>
            </HexRow>
            <Spectrum />
          </ColorBody>
          <TabBar names={['Swatches', 'Brushes', 'Symbols']} on="Swatches" />
          <TabBar mark names={['Stroke', 'Gradient', 'Transparency']} on="Gradient" />
          <TabBar names={['Appearance', 'Graphic Styles']} on="Appearance" />
          <TabBar names={['Layers', 'Artboards']} on="Layers" />
          <LayerList>
            <Layer>
              <LayerCell $w={14}>
                <Glyph $w={9} $line $sw={2}><path d="M1 8c4-6 10-6 14 0-4 5-10 5-14 0z" /><circle cx="8" cy="8" r="1" /></Glyph>
              </LayerCell>
              <LayerCell $w={14} />
              <LayerCell $w={4} $blue />
              <LayerName>
                <Caret $big $to="right" />
                <Thumb $w={11} $line $c="#999"><path d="M1 8c5-2 8 3 14-3M4 11c4-2 6-3 10-1" /></Thumb>
                Layer 1
              </LayerName>
              <LayerCell $w={1} />
              <LayerCell $w={22}>
                <Glyph $w={7} $line $sw={2}><circle cx="8" cy="8" r="6" /></Glyph>
                <LayerMark />
              </LayerCell>
            </Layer>
          </LayerList>
          <LayerFoot>
            <span>1 Layer</span>
            <Glyph $w={8} $line $sw={2}><circle cx="9" cy="6" r="5" /><path d="M5 10l-4 5" /></Glyph>
            <Glyph $w={8} $line $sw={2}><path d="M1 1h10v10H1z" /><circle cx="10" cy="10" r="4" fill="#bbb" /></Glyph>
            <Glyph $w={9}><path d="M0 2h5v3h10v9h-3V8H4V5H0z" /></Glyph>
            <Glyph $w={8}><path d="M1 2h14v13H9V8H1z" /></Glyph>
            <Glyph $w={8} $c="#5e5e5e"><path d="M1 3h14v2H1zM3 6h10v9H3zM6 1h4v2H6z" /></Glyph>
          </LayerFoot>
        </Panels>
      </Body>

      <Taskbar>
        <Apps>
          {apps.map(([name, run, art]) => (
            <AppButton key={name} $run={run} aria-label={name}>
              {art === 'Ps' && <Badge $ink="#8fb6f5" $bg="#0c1a5c">Ps</Badge>}
              {art === 'Ai' && <Badge $ink="#f0a030" $bg="#3a2205">Ai</Badge>}
              {typeof art !== 'string' && <Glyph>{art}</Glyph>}
            </AppButton>
          ))}
        </Apps>
        <Tray>
          <Caret $to="up" $c="#f0f0f0" />
          <Glyph $w={10} $c="#f0f0f0"><path d="M2 1h2v14H2zM4 2h5v2h6l-2 3 2 3H8V8H4z" /></Glyph>
          <Glyph $w={10} $line $c="#f0f0f0" $sw={2}><path d="M6 3h9v8H8M10 11v3M7 14h7M1 2v4h4V2M3 6v9" /></Glyph>
          <Glyph $w={10} $c="#f0f0f0"><path d="M1 5h3l4-4v14l-4-4H1z" /><path d="M10 5c2 2 2 4 0 6M12 2c4 4 4 8 0 12" fill="none" stroke="#f0f0f0" /></Glyph>
          <time>2:39 AM</time>
        </Tray>
      </Taskbar>
    </Screen>
  )
}
